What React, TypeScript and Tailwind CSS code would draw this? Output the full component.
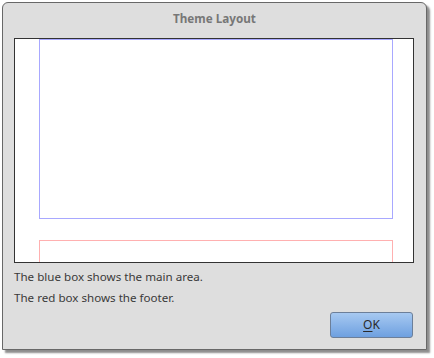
export default function App() {
  return (
    <div className="h-[358px] w-[434px] bg-white" style={{ fontFamily: '"Noto Sans", "Open Sans", sans-serif' }}>
      <div className="ml-[2px] pt-[2px]">
        <div className="flex h-[348px] w-[425px] flex-col rounded-t-[6px] border border-[#686868] bg-[#dedede] shadow-[3px_3px_2px_rgba(0,0,0,0.45)]">
          <div className="flex h-[35px] items-center justify-center pb-[3px] text-[11.7px] font-bold text-[#777777]">
            Theme Layout
          </div>

          <div className="ml-[11px] h-[225px] w-[400px] overflow-hidden border border-[#333333] bg-white">
            <div className="ml-[24px] mr-[20px] h-[180px] border border-[#a8a8ff]" />
            <div className="ml-[24px] mr-[20px] mt-[21px] h-[40px] border border-[#ffb0b0]" />
          </div>

          <div className="ml-[11px] mt-[3px] text-[11.6px] leading-[21px] text-[#3a3a3a]">
            <p>The blue box shows the main area.</p>
            <p>The red box shows the footer.</p>
          </div>

          <div className="flex flex-1 items-end justify-end pb-[11px] pr-[13px]">
            <button className="h-[26px] w-[83px] rounded-[3px] border border-[#6c7f99] bg-gradient-to-b from-[#a7c9f1] to-[#6ea0e0] text-[12px] text-[#2a2a2a]">
              <span className="underline underline-offset-2">O</span>K
            </button>
          </div>
        </div>
      </div>
    </div>
  );
}
